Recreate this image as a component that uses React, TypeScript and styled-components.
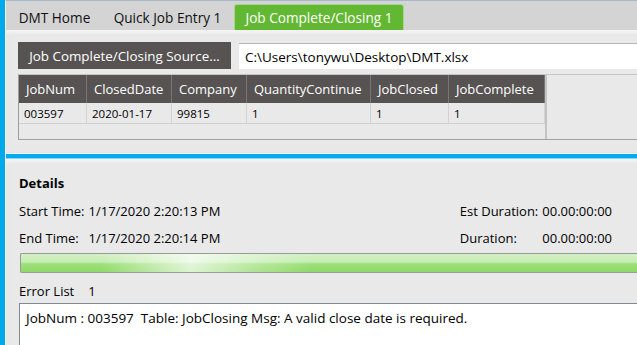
import React from 'react';
import styled, { createGlobalStyle } from 'styled-components';

const GlobalStyle = createGlobalStyle`
  html, body {
    margin: 0;
    padding: 0;
  }
  body {
    width: 637px;
    height: 345px;
    overflow: hidden;
    background: #e8e8e8;
    font-family: "Open Sans", "Noto Sans", sans-serif;
    color: #000;
  }
`;

const Window = styled.div`
  display: flex;
  width: 637px;
  height: 345px;
  overflow: hidden;
`;

const SideBar = styled.div`
  flex: none;
  width: 5px;
  background: #00aaea;
`;

const Main = styled.div`
  flex: 1;
  min-width: 0;
  display: flex;
  flex-direction: column;
  border-top: 1px solid #a8b8c8;
  border-left: 1px solid #f2f2f2;
  background: #e4e4e4;

  & > * {
    flex: none;
  }
`;

const TabStrip = styled.div`
  display: flex;
  align-items: flex-end;
  gap: 3px;
  height: 29px;
  padding-left: 2px;
  background: #d4d4d4;
`;

const Tab = styled.div<{ $active?: boolean; $width: number }>`
  display: flex;
  align-items: center;
  justify-content: center;
  box-sizing: border-box;
  width: ${(p) => p.$width}px;
  height: 26px;
  padding-bottom: 1px;
  font-size: 13.6px;
  white-space: nowrap;
  color: ${(p) => (p.$active ? '#fff' : '#111')};
  background: ${(p) => (p.$active ? '#62b833' : 'transparent')};
  border: 1px solid ${(p) => (p.$active ? '#a6d88a' : 'transparent')};
  border-bottom: none;
  border-radius: 3px 3px 0 0;
`;

const Section = styled.div<{ $top: number; $bottom: number }>`
  padding: ${(p) => p.$top}px 0 ${(p) => p.$bottom}px 5px;
  background: linear-gradient(#f4f4f4, #e8e8e8 6px);
`;

const Panel = styled.div`
  background: #e9e9e9;
  border-radius: 5px 0 0 5px;
`;

const SourcePanel = styled(Panel)`
  padding: 8px 0 5px 7px;
`;

const Toolbar = styled.div`
  display: flex;
  align-items: flex-start;
  gap: 8px;
`;

const SourceButton = styled.div`
  flex: none;
  width: 213px;
  height: 27px;
  display: flex;
  align-items: center;
  justify-content: center;
  background: #575352;
  color: #fff;
  font-size: 13.4px;
  white-space: nowrap;
`;

const PathInput = styled.div`
  flex: 1;
  height: 25px;
  margin-top: 1px;
  padding-left: 6px;
  display: flex;
  align-items: center;
  background: #fff;
  border-top: 1px solid #b4b4b4;
  font-size: 13.5px;
  white-space: nowrap;
`;

const Grid = styled.div`
  display: flex;
  height: 64px;
  margin-top: 5px;
  border-top: 1px solid #c6c6c6;
  border-bottom: 1px solid #a2a2a2;
  border-left: 1px solid #9c9c9c;
  background: #e9e9e9;
`;

const GridBody = styled.div`
  flex: none;
  display: grid;
  grid-template-columns: 68px 85px 75px 124px 78px 96px;
  grid-template-rows: 28px 21px;
  align-content: start;
  border-right: 2px solid #c4c4c4;
`;

const HeaderCell = styled.div`
  display: flex;
  align-items: center;
  padding-left: 7px;
  background: #575352;
  color: #fff;
  font-size: 13px;
  white-space: nowrap;
  border-right: 1px solid #7a7674;
`;

const DataCell = styled.div`
  display: flex;
  align-items: center;
  padding-left: 5px;
  font-size: 11.5px;
  border-right: 1px solid #d2d2d2;
  border-bottom: 1px solid #d2d2d2;
`;

const Divider = styled.div`
  height: 4px;
  margin-top: 1px;
  background: #00acee;
  border-top: 1px solid #f8f8f8;
  border-bottom: 1px solid #8fd3f4;
`;

const DetailsPanel = styled(Panel)`
  padding: 12px 0 0 8px;
  font-size: 13px;
`;

const Title = styled.div`
  font-weight: 700;
  line-height: 16px;
`;

const InfoRow = styled.div`
  display: flex;
  justify-content: space-between;
  padding-right: 25px;
`;

const InfoTable = styled.div`
  display: grid;
  grid-template-columns: auto auto;
  grid-auto-rows: 27px;
  column-gap: 4px;
  align-items: center;
  margin-top: 6px;
  white-space: nowrap;
`;

const Progress = styled.div`
  height: 18px;
  margin: 2px 0 0 1px;
  border: 1px solid #9a9a9a;
  border-right: none;
  border-radius: 2px 0 0 2px;
  background:
    linear-gradient(90deg, transparent 80px, rgba(255, 255, 255, 0.7) 170px, rgba(255, 255, 255, 0.25) 240px, transparent 290px),
    linear-gradient(#d2f1c4 0%, #c6edb2 45%, #9de07a 55%, #8fd868 100%);
`;

const ErrorRow = styled.div`
  display: flex;
  gap: 14px;
  margin-top: 9px;
  line-height: 18px;
`;

const ErrorBox = styled.div`
  height: 60px;
  margin-top: 3px;
  padding: 6px 0 0 6px;
  background: #fff;
  border: 1px solid #828790;
  border-right: none;
  font-size: 13.5px;
  line-height: 17px;
  white-space: nowrap;
`;

const columns = ['JobNum', 'ClosedDate', 'Company', 'QuantityContinue', 'JobClosed', 'JobComplete'];
const row = ['003597', '2020-01-17', '99815', '1', '1', '1'];

export default function App() {
  return (
    <>
      <GlobalStyle />
      <Window>
        <SideBar />
        <Main>
          <TabStrip>
            <Tab $width={93}>DMT Home</Tab>
            <Tab $width={127}>Quick Job Entry 1</Tab>
            <Tab $width={170} $active>
              Job Complete/Closing 1
            </Tab>
          </TabStrip>

          <Section $top={4} $bottom={7}>
            <SourcePanel>
              <Toolbar>
                <SourceButton>Job Complete/Closing Source...</SourceButton>
                <PathInput>C:\Users\tonywu\Desktop\DMT.xlsx</PathInput>
              </Toolbar>
              <Grid>
                <GridBody>
                  {columns.map((c) => (
                    <HeaderCell key={c}>{c}</HeaderCell>
                  ))}
                  {row.map((v, i) => (
                    <DataCell key={i}>{v}</DataCell>
                  ))}
                </GridBody>
              </Grid>
            </SourcePanel>
          </Section>

          <Divider />

          <Section $top={4} $bottom={0}>
            <DetailsPanel>
              <Title>Details</Title>
              <InfoRow>
                <InfoTable>
                  <span>Start Time:</span>
                  <span>1/17/2020 2:20:13 PM</span>
                  <span>End Time:</span>
                  <span>1/17/2020 2:20:14 PM</span>
                </InfoTable>
                <InfoTable>
                  <span>Est Duration:</span>
                  <span>00.00:00:00</span>
                  <span>Duration:</span>
                  <span>00.00:00:00</span>
                </InfoTable>
              </InfoRow>
              <Progress />
              <ErrorRow>
                <span>Error List</span>
                <span>1</span>
              </ErrorRow>
              <ErrorBox>JobNum : 003597&nbsp;&nbsp;Table: JobClosing Msg: A valid close date is required.</ErrorBox>
            </DetailsPanel>
          </Section>
        </Main>
      </Window>
    </>
  );
}
